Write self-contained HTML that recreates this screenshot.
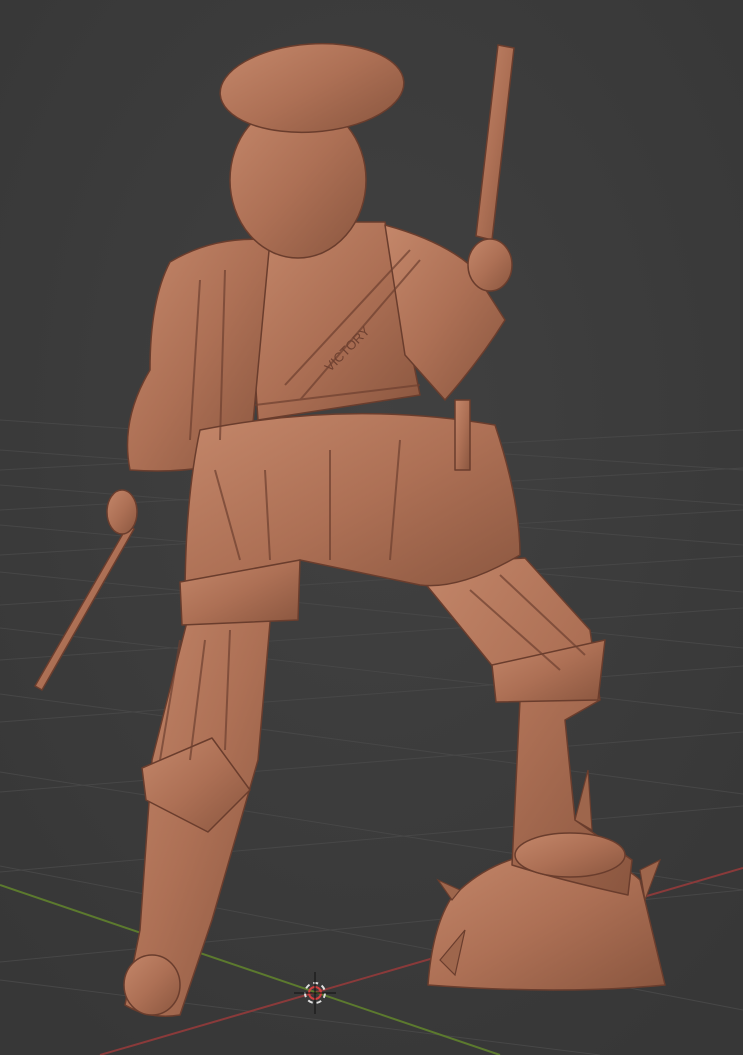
<!DOCTYPE html>
<html><head><meta charset="utf-8"><style>
html,body{margin:0;padding:0;background:#3c3c3c;width:743px;height:1055px;overflow:hidden}
svg{display:block}
</style></head><body>
<svg width="743" height="1055" viewBox="0 0 743 1055" xmlns="http://www.w3.org/2000/svg">
<defs>
<radialGradient id="bg" cx="50%" cy="40%" r="70%"><stop offset="0" stop-color="#414141"/><stop offset="1" stop-color="#373737"/></radialGradient>
<linearGradient id="cu" x1="0" y1="0" x2="1" y2="1"><stop offset="0" stop-color="#c4876a"/><stop offset="0.5" stop-color="#ad7055"/><stop offset="1" stop-color="#8a563f"/></linearGradient>
</defs>
<rect width="743" height="1055" fill="url(#bg)"/>
<g stroke="#474747" stroke-width="1" fill="none">
<path d="M0 470 L743 430 M0 510 L743 468 M0 555 L743 510 M0 605 L743 556 M0 660 L743 608 M0 722 L743 666 M0 792 L743 732 M0 872 L743 806 M0 962 L743 890"/>
<path d="M0 420 L743 470 M0 450 L743 505 M0 485 L743 545 M0 525 L743 592 M0 572 L743 648 M0 628 L743 714 M0 694 L743 794 M0 772 L743 890 M0 866 L743 1010 M0 980 L600 1055"/>
</g>
<path d="M100 1055 L743 868" stroke="#8a3a3a" stroke-width="2"/>
<path d="M0 885 L500 1055" stroke="#5c7a2e" stroke-width="2"/>
<g fill="url(#cu)" stroke="#6a3d2d" stroke-width="1.5" stroke-linejoin="round">
<path d="M428 985 Q432 930 450 900 Q490 855 560 850 Q620 860 640 880 L665 985 Q560 995 428 985 Z"/>
<path d="M35 686 L128 525 L134 529 L42 690 Z"/>
<path d="M498 45 L514 48 L492 240 L476 236 Z"/>
<path d="M190 610 L272 600 L258 760 L212 920 L180 1015 Q150 1020 125 1005 L140 930 L152 760 Z"/>
<path d="M410 565 L525 558 L590 630 L600 700 L565 720 L575 820 L632 860 L628 895 Q560 880 512 865 L520 700 L455 620 Z"/>
<path d="M268 222 L385 222 L420 395 L258 420 L250 300 Z"/>
<path d="M170 262 Q215 235 270 240 L250 455 Q200 475 130 470 Q120 420 150 370 Q150 300 170 262 Z"/>
<path d="M385 225 Q440 240 470 265 L505 320 Q480 360 445 400 L405 355 Z"/>
<path d="M200 430 Q350 400 495 425 Q520 500 520 555 Q460 590 420 585 L300 560 Q240 580 185 600 Q185 500 200 430 Z"/>
<path d="M180 582 L300 560 L298 620 L182 625 Z"/>
<path d="M142 768 L212 738 L250 790 L208 832 L146 800 Z"/>
<path d="M492 665 L605 640 L598 700 L496 702 Z"/>
<path d="M455 400 L470 400 L470 470 L455 470 Z"/>
<ellipse cx="298" cy="180" rx="68" ry="78"/>
<ellipse cx="312" cy="88" rx="92" ry="44" transform="rotate(-4 312 88)"/>
<ellipse cx="122" cy="512" rx="15" ry="22"/>
<ellipse cx="490" cy="265" rx="22" ry="26"/>
<ellipse cx="152" cy="985" rx="28" ry="30"/>
<ellipse cx="570" cy="855" rx="55" ry="22"/>
</g>
<g fill="#9e664c" stroke="#6a3d2d" stroke-width="1.2">
<path d="M440 960 L465 930 L455 975 Z"/><path d="M640 870 L660 860 L645 900 Z"/><path d="M575 820 L588 770 L592 830 Z"/><path d="M438 880 L460 890 L452 900 Z"/>
</g>
<g stroke="#6e4030" stroke-width="2" fill="none" opacity="0.7">
<path d="M285 385 L410 250"/><path d="M300 400 L420 260"/><path d="M255 405 L420 385"/>
<path d="M215 470 L240 560 M265 470 L270 560 M330 450 L330 560 M400 440 L390 560"/>
<path d="M180 640 L160 760 M205 640 L190 760 M230 630 L225 750 M470 590 L560 670 M500 575 L585 655"/>
<path d="M200 280 L190 440 M225 270 L220 440"/>
</g>
<text x="300" y="360" transform="rotate(-45 330 330)" font-family="Liberation Sans,sans-serif" font-size="13" fill="#6e4030">VICTORY</text>
<circle cx="315" cy="993" r="10" fill="none" stroke="#e0e0e0" stroke-width="2" stroke-dasharray="5 4"/>
<circle cx="315" cy="993" r="6" fill="none" stroke="#d04040" stroke-width="2"/>
<path d="M315 972 L315 1014 M294 993 L336 993" stroke="#111" stroke-width="1"/>
</svg>
</body></html>
